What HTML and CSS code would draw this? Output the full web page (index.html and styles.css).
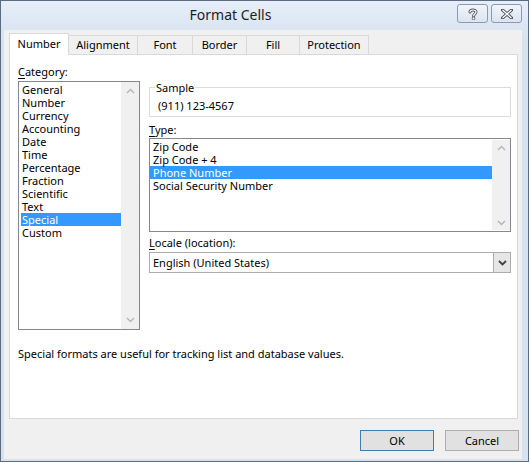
FILE: index.html
```html
<!DOCTYPE html>
<html lang="en">
<head>
<meta charset="utf-8">
<title>Format Cells</title>
<link rel="stylesheet" href="styles.css">
</head>
<body>
<div class="window">
  <div class="titlebar">
    <div class="title">Format Cells</div>
    <div class="caption-buttons">
      <div class="cap-btn">
        <svg width="10" height="12" viewBox="0 0 10 12"><path d="M2 4 C2 1.5 8 1.2 8 4 C8 5.6 5.6 6 5.6 8" fill="none" stroke="#4a5566" stroke-width="3" stroke-linecap="round"/><path d="M2 4 C2 1.5 8 1.2 8 4 C8 5.6 5.6 6 5.6 8" fill="none" stroke="#fff" stroke-width="1.2" stroke-linecap="round"/><circle cx="5.6" cy="10.4" r="1.4" fill="#fff" stroke="#4a5566" stroke-width="0.9"/></svg>
      </div>
      <div class="cap-btn">
        <svg width="12" height="10" viewBox="0 0 12 10"><path d="M1.5 1 L10.5 9 M10.5 1 L1.5 9" stroke="#4a5566" stroke-width="3.2" stroke-linecap="square"/><path d="M1.5 1 L10.5 9 M10.5 1 L1.5 9" stroke="#fff" stroke-width="1.3"/></svg>
      </div>
    </div>
  </div>
  <div class="client">
    <div class="tabs">
      <div class="tab active">Number</div>
      <div class="tab">Alignment</div>
      <div class="tab">Font</div>
      <div class="tab">Border</div>
      <div class="tab">Fill</div>
      <div class="tab">Protection</div>
    </div>
    <div class="panel">
      <div class="col-left">
        <div class="label"><u>C</u>ategory:</div>
        <div class="listbox category">
          <ul class="items">
            <li>General</li>
            <li>Number</li>
            <li>Currency</li>
            <li>Accounting</li>
            <li>Date</li>
            <li>Time</li>
            <li>Percentage</li>
            <li>Fraction</li>
            <li>Scientific</li>
            <li>Text</li>
            <li class="selected">Special</li>
            <li>Custom</li>
          </ul>
          <div class="scrollbar">
            <svg width="9" height="6" viewBox="0 0 9 6"><path d="M1 5 L4.5 1.5 L8 5" fill="none" stroke="#b4b4b4" stroke-width="1.4"/></svg>
            <svg width="9" height="6" viewBox="0 0 9 6"><path d="M1 1 L4.5 4.5 L8 1" fill="none" stroke="#b4b4b4" stroke-width="1.4"/></svg>
          </div>
        </div>
      </div>
      <div class="col-right">
        <fieldset class="sample">
          <legend>Sample</legend>
          <div class="sample-value">(911) 123-4567</div>
        </fieldset>
        <div class="label type-label"><u>T</u>ype:</div>
        <div class="listbox type">
          <ul class="items">
            <li>Zip Code</li>
            <li>Zip Code + 4</li>
            <li class="selected">Phone Number</li>
            <li>Social Security Number</li>
          </ul>
          <div class="scrollbar">
            <svg width="9" height="6" viewBox="0 0 9 6"><path d="M1 5 L4.5 1.5 L8 5" fill="none" stroke="#b4b4b4" stroke-width="1.4"/></svg>
            <svg width="9" height="6" viewBox="0 0 9 6"><path d="M1 1 L4.5 4.5 L8 1" fill="none" stroke="#b4b4b4" stroke-width="1.4"/></svg>
          </div>
        </div>
        <div class="label locale-label"><u>L</u>ocale (location):</div>
        <div class="combo">
          <span class="combo-text">English (United States)</span>
          <div class="combo-btn">
            <svg width="9" height="6" viewBox="0 0 9 6"><path d="M1 1 L4.5 4.5 L8 1" fill="none" stroke="#404040" stroke-width="1.8"/></svg>
          </div>
        </div>
      </div>
      <div class="desc">Special formats are useful for tracking list and database values.</div>
    </div>
    <div class="buttons">
      <div class="btn default">OK</div>
      <div class="btn">Cancel</div>
    </div>
  </div>
</div>
</body>
</html>
```

FILE: styles.css
```css
* { box-sizing: border-box; }
html, body { margin: 0; padding: 0; }
body {
  width: 529px;
  height: 462px;
  overflow: hidden;
  background: #d9e4f1;
  font-family: "Noto Sans", "Segoe UI", sans-serif;
  font-size: 11px;
  color: #000;
}
.window {
  width: 529px;
  height: 462px;
  border: 1px solid #5b6b80;
  background: linear-gradient(#e6eef8, #d6e2f0 40px, #d6e2f0);
  display: flex;
  flex-direction: column;
  padding: 0 6px 2px 3px;
}
.titlebar {
  height: 29px;
  display: flex;
  align-items: flex-start;
}
.title {
  flex: 1;
  text-align: center;
  font-size: 14px;
  line-height: 18px;
  padding-top: 5px;
  color: #1e1e1e;
}
.caption-buttons {
  display: flex;
  gap: 3px;
  padding-top: 3px;
}
.cap-btn {
  width: 31px;
  height: 19px;
  border: 1px solid #8a9ab0;
  border-radius: 3px;
  background: linear-gradient(#f1f5fa, #dbe4ef);
  display: flex;
  align-items: center;
  justify-content: center;
}
.client {
  flex: 1;
  background: #f0f0f0;
  padding: 3px 0 0 5px;
  display: flex;
  flex-direction: column;
}
.tabs {
  display: flex;
  align-items: flex-end;
  height: 21px;
  position: relative;
  z-index: 1;
}
.tab {
  height: 19px;
  border: 1px solid #d9d9d9;
  border-bottom: none;
  border-left: none;
  background: #f0f0f0;
  padding: 0;
  line-height: 18px;
  text-align: center;
}
.tab:nth-child(2) { width: 69px; }
.tab:nth-child(3) { width: 55px; }
.tab:nth-child(4) { width: 54px; }
.tab:nth-child(5) { width: 53px; }
.tab:nth-child(6) { width: 69px; }
.tab.active {
  width: 60px;
  height: 22px;
  margin-bottom: -1px;
  background: #fff;
  border-left: 1px solid #d9d9d9;
  line-height: 20px;
}
.panel {
  width: 509px;
  height: 365px;
  background: #fff;
  border: 1px solid #d9d9d9;
  display: grid;
  grid-template-columns: 122px 362px;
  grid-template-rows: auto auto;
  column-gap: 9px;
  align-content: start;
  padding: 9px 0 0 8px;
}
.label { line-height: 15px; height: 15px; }
.label u { text-decoration-thickness: 1px; text-underline-offset: 2px; }
.listbox {
  border: 1px solid #828790;
  background: #fff;
  display: flex;
}
.items {
  list-style: none;
  margin: 0;
  padding: 0;
  flex: 1;
}
.items li {
  height: 13px;
  line-height: 13px;
  padding-left: 3px;
  white-space: nowrap;
}
.items li.selected { background: #3399ff; color: #fff; }
.scrollbar {
  width: 18px;
  background: #f0f0f0;
  display: flex;
  flex-direction: column;
  justify-content: space-between;
  align-items: center;
  padding: 6px 0 6px;
}
.category {
  margin-top: 2px;
  height: 249px;
}
.category .items { padding-top: 1px; padding-left: 2px; }
.category .items li { padding-left: 1px; }
.sample {
  margin: 16px 0 0 0;
  padding: 3px 8px 3px 8px;
  border: 1px solid #dcdcdc;
  min-width: 0;
}
.sample legend {
  padding: 0 1px;
  margin-left: -3px;
  line-height: 15px;
}
.sample-value { line-height: 15px; height: 15px; }
.type-label { margin-top: 5px; }
.type {
  margin-top: 1px;
  height: 94px;
}
.type .items { padding-top: 1px; }
.type .items li { padding-left: 3px; }
.type .scrollbar { margin: 1px 0; padding: 5px 0 4px; }
.locale-label { margin-top: 3px; }
.combo {
  margin-top: 2px;
  height: 21px;
  border: 1px solid #acacac;
  display: flex;
  align-items: center;
}
.combo-text { flex: 1; padding-left: 3px; }
.combo-btn {
  width: 17px;
  height: 19px;
  background: #e6e6e6;
  border-left: 1px solid #acacac;
  display: flex;
  align-items: center;
  justify-content: center;
}
.desc {
  grid-column: 1 / 3;
  margin-top: 16px;
  line-height: 15px;
}
.buttons {
  display: flex;
  justify-content: flex-end;
  gap: 11px;
  margin-top: 11px;
  width: 510px;
}
.btn {
  width: 74px;
  height: 21px;
  border: 1px solid #adadad;
  background: #e1e1e1;
  text-align: center;
  line-height: 19px;
}
.btn.default { border-color: #3c7fb1; }
```
